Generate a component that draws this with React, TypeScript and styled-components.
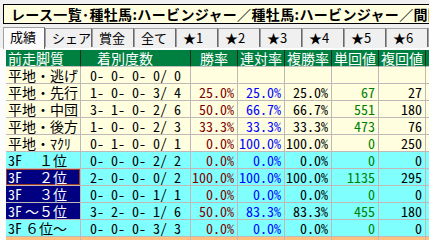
import React from "react";
import styled, { createGlobalStyle } from "styled-components";

const GlobalStyle = createGlobalStyle`
  html, body {
    margin: 0;
    padding: 0;
    background: #f0f0f0;
    overflow: hidden;
  }
  body {
    font-family: "Noto Sans CJK JP", "DejaVu Sans", sans-serif;
  }
`;

const Window = styled.div`
  width: 429px;
  height: 240px;
  overflow: hidden;
  background: #f0f0f0;
  display: flex;
  flex-direction: column;
`;

const TitleBar = styled.div`
  margin: 4px 0 0 3px;
  height: 20px;
  box-sizing: border-box;
  border: 1px solid #000;
  border-right: none;
  background: #ffffe0;
  padding-left: 7px;
  font-size: 14px;
  font-weight: bold;
  letter-spacing: 0.35px;
  line-height: 18px;
  color: #000;
  white-space: nowrap;
  overflow: hidden;
`;

const TabStrip = styled.div`
  display: flex;
  align-items: flex-end;
  height: 24px;
  padding-left: 3px;
  white-space: nowrap;
`;

const Tab = styled.div<{ $active?: boolean }>`
  flex: 0 0 42px;
  box-sizing: border-box;
  height: ${(p) => (p.$active ? "22px" : "19px")};
  margin-bottom: ${(p) => (p.$active ? "-1px" : "1px")};
  padding-left: 6px;
  background: ${(p) => (p.$active ? "#fcfcfc" : "#f0f0f0")};
  border: 1px solid #a0a0a0;
  border-right-color: #696969;
  border-bottom: none;
  font-size: 13px;
  line-height: 18px;
  color: #000;
  position: relative;
  z-index: ${(p) => (p.$active ? 1 : 0)};
`;

const Panel = styled.div`
  flex: 1;
  background: #fcfcfc;
  border-top: 1px solid #fff;
  padding: 1px 0 0 6px;
  overflow: hidden;
`;

const Grid = styled.div`
  display: flex;
  flex-direction: column;
`;

const COLS = "75px 110px 47px 47px 47px 47px 47px 60px";

const HeaderRow = styled.div`
  display: grid;
  grid-template-columns: ${COLS};
  height: 17px;
  background: #008040;
`;

const HeaderCell = styled.div<{ $center?: boolean }>`
  box-sizing: border-box;
  border-right: 1px solid #1c2c20;
  border-bottom: 1px solid #c0c0c0;
  color: #fff;
  font-size: 14px;
  line-height: 16px;
  white-space: nowrap;
  overflow: hidden;
  text-align: ${(p) => (p.$center ? "center" : "left")};
  padding-left: ${(p) => (p.$center ? "0" : "2px")};
`;

type Tone = "cream" | "cyan" | "orange";

const toneBg: Record<Tone, string> = {
  cream: "#ffffe0",
  cyan: "#80ffff",
  orange: "#ffc080",
};

const Row = styled.div<{ $tone: Tone }>`
  display: grid;
  grid-template-columns: ${COLS};
  height: 17px;
  background: ${(p) => toneBg[p.$tone]};
`;

const LabelCell = styled.div<{ $picked?: boolean; $focus?: boolean }>`
  box-sizing: border-box;
  border-right: 1px solid #c0b8b8;
  border-bottom: 1px solid #c0b8b8;
  padding-left: 2px;
  font-size: 14px;
  line-height: 16px;
  white-space: pre;
  overflow: hidden;
  background: ${(p) => (p.$picked ? "#000080" : "transparent")};
  color: ${(p) => (p.$picked ? "#fff" : "#000")};
  box-shadow: ${(p) => (p.$focus ? "inset 0 0 0 1px #a03c28" : "none")};
`;

// half-width Latin glyphs of the CJK face, so every digit is 7px wide
const Half = styled.span`
  font-feature-settings: "hwid";
  margin-right: 3px;
`;

const NumCell = styled.div<{ $color?: string; $left?: boolean }>`
  box-sizing: border-box;
  border-right: 1px solid #c0b8b8;
  border-bottom: 1px solid #c0b8b8;
  font-size: 14px;
  font-feature-settings: "hwid";
  line-height: 16px;
  white-space: pre;
  overflow: hidden;
  color: ${(p) => p.$color ?? "#000"};
  text-align: ${(p) => (p.$left ? "left" : "right")};
  padding: ${(p) => (p.$left ? "0 0 0 9px" : "0 3px 0 0")};
`;

const tabs = ["成績", "シェア", "賞金", "全て", "★1", "★2", "★3", "★4", "★5", "★6", ""];

const headers = ["前走脚質", "着別度数", "勝率", "連対率", "複勝率", "単回値", "複回値", ""];

type Stat = {
  prefix?: string;
  label: string;
  tone: Tone;
  record: string;
  win?: string;
  place?: string;
  show?: string;
  winRet?: string;
  showRet?: string;
  picked?: boolean;
  focus?: boolean;
};

const rows: Stat[] = [
  { label: "平地・逃げ", tone: "cream", record: "0- 0- 0- 0/ 0" },
  { label: "平地・先行", tone: "cream", record: "1- 0- 0- 3/ 4", win: "25.0%", place: "25.0%", show: "25.0%", winRet: "67", showRet: "27" },
  { label: "平地・中団", tone: "cream", record: "3- 1- 0- 2/ 6", win: "50.0%", place: "66.7%", show: "66.7%", winRet: "551", showRet: "180" },
  { label: "平地・後方", tone: "cream", record: "1- 0- 0- 2/ 3", win: "33.3%", place: "33.3%", show: "33.3%", winRet: "473", showRet: "76" },
  { label: "平地・ﾏｸﾘ", tone: "cream", record: "0- 1- 0- 0/ 1", win: "0.0%", place: "100.0%", show: "100.0%", winRet: "0", showRet: "250" },
  { prefix: "3F", label: "　１位", tone: "cyan", record: "0- 0- 0- 2/ 2", win: "0.0%", place: "0.0%", show: "0.0%", winRet: "0", showRet: "0" },
  { prefix: "3F", label: "　２位", tone: "cyan", record: "2- 0- 0- 0/ 2", win: "100.0%", place: "100.0%", show: "100.0%", winRet: "1135", showRet: "295", picked: true, focus: true },
  { prefix: "3F", label: "　３位", tone: "cyan", record: "0- 0- 0- 1/ 1", win: "0.0%", place: "0.0%", show: "0.0%", winRet: "0", showRet: "0", picked: true },
  { prefix: "3F", label: "～５位", tone: "cyan", record: "3- 2- 0- 1/ 6", win: "50.0%", place: "83.3%", show: "83.3%", winRet: "455", showRet: "180", picked: true },
  { prefix: "3F", label: "６位～", tone: "cyan", record: "0- 0- 0- 3/ 3", win: "0.0%", place: "0.0%", show: "0.0%", winRet: "0", showRet: "0" },
  { label: "", tone: "orange", record: "" },
];

export default function App() {
  return (
    <Window>
      <GlobalStyle />
      <TitleBar>レース一覧･種牡馬:ハービンジャー／種牡馬:ハービンジャー／間隔</TitleBar>
      <TabStrip>
        {tabs.map((t, i) => (
          <Tab key={i} $active={i === 0}>
            {t}
          </Tab>
        ))}
      </TabStrip>
      <Panel>
        <Grid>
          <HeaderRow>
            {headers.map((h, i) => (
              <HeaderCell key={i} $center={i >= 2}>
                {i === 1 ? `　${h}` : h}
              </HeaderCell>
            ))}
          </HeaderRow>
          {rows.map((r, i) => (
            <Row key={i} $tone={r.tone}>
              <LabelCell $picked={r.picked} $focus={r.focus}>
                {r.prefix && <Half>{r.prefix}</Half>}
                {r.label}
              </LabelCell>
              <NumCell $left>{r.record}</NumCell>
              <NumCell $color="#800000">{r.win}</NumCell>
              <NumCell $color="#0000ff">{r.place}</NumCell>
              <NumCell>{r.show}</NumCell>
              <NumCell $color="#008000">{r.winRet}</NumCell>
              <NumCell>{r.showRet}</NumCell>
              <NumCell />
            </Row>
          ))}
        </Grid>
      </Panel>
    </Window>
  );
}
